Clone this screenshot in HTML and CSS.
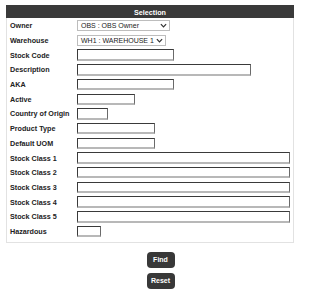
FILE: index.html
```html
<!DOCTYPE html>
<html>
<head>
<meta charset="utf-8">
<link rel="stylesheet" href="styles.css">
</head>
<body>
<div class="panel">
  <div class="header">Selection</div>
  <div class="rows">
    <div class="label">Owner</div>
    <div class="cell"><div class="select w-owner"><span>OBS : OBS Owner</span><svg class="chev" viewBox="0 0 8 5" width="7" height="5"><path d="M1 1 L4 4 L7 1" fill="none" stroke="#333" stroke-width="1.4"/></svg></div></div>
    <div class="label">Warehouse</div>
    <div class="cell"><div class="select w-wh"><span>WH1 : WAREHOUSE 1</span><svg class="chev" viewBox="0 0 8 5" width="7" height="5"><path d="M1 1 L4 4 L7 1" fill="none" stroke="#333" stroke-width="1.4"/></svg></div></div>
    <div class="label">Stock Code</div>
    <div class="cell"><input class="inp w-97" type="text"></div>
    <div class="label">Description</div>
    <div class="cell"><input class="inp w-174" type="text"></div>
    <div class="label">AKA</div>
    <div class="cell"><input class="inp w-97" type="text"></div>
    <div class="label">Active</div>
    <div class="cell"><input class="inp w-58" type="text"></div>
    <div class="label">Country of Origin</div>
    <div class="cell"><input class="inp w-31" type="text"></div>
    <div class="label">Product Type</div>
    <div class="cell"><input class="inp w-78" type="text"></div>
    <div class="label">Default UOM</div>
    <div class="cell"><input class="inp w-78" type="text"></div>
    <div class="label">Stock Class 1</div>
    <div class="cell"><input class="inp w-213" type="text"></div>
    <div class="label">Stock Class 2</div>
    <div class="cell"><input class="inp w-213" type="text"></div>
    <div class="label">Stock Class 3</div>
    <div class="cell"><input class="inp w-213" type="text"></div>
    <div class="label">Stock Class 4</div>
    <div class="cell"><input class="inp w-213" type="text"></div>
    <div class="label">Stock Class 5</div>
    <div class="cell"><input class="inp w-213" type="text"></div>
    <div class="label">Hazardous</div>
    <div class="cell"><input class="inp w-24" type="text"></div>
  </div>
</div>
<div class="actions">
  <button class="btn">Find</button>
  <button class="btn">Reset</button>
</div>
</body>
</html>
```
FILE: styles.css
```css
html, body {
  margin: 0;
  padding: 0;
  background: #fff;
  font-family: "Liberation Sans", Arial, sans-serif;
}
.panel {
  margin: 5px 0 0 6px;
  width: 288px;
  box-sizing: border-box;
  border: 1px solid #e2e2e2;
  border-top: none;
}
.header {
  background: #3a3a3a;
  color: #fff;
  font-weight: bold;
  font-size: 7.2px;
  text-align: center;
  height: 13px;
  line-height: 15px;
  margin: 0 -1px;
}
.rows {
  display: grid;
  grid-template-columns: 67px 1fr;
  grid-auto-rows: 14.7px;
  padding: 0.5px 3px 3px 3px;
}
.label {
  font-weight: bold;
  font-size: 7.2px;
  color: #222;
  display: flex;
  align-items: center;
  white-space: nowrap;
}
.cell {
  display: flex;
  align-items: center;
}
.inp {
  box-sizing: border-box;
  height: 11.5px;
  margin: 0;
  padding: 0;
  background: #fff;
  border-style: solid;
  border-width: 1.5px 1.5px 2px 1.5px;
  border-color: #3a3a3a #6a6a6a #b8b8b8 #3a3a3a;
  outline: none;
}
.w-97 { width: 97px; }
.w-174 { width: 174px; }
.w-58 { width: 58px; }
.w-31 { width: 31px; }
.w-78 { width: 78px; }
.w-213 { width: 213px; }
.w-24 { width: 24px; }
.select {
  box-sizing: border-box;
  height: 11px;
  border: 1px solid #bdbdbd;
  background: #fff;
  display: flex;
  align-items: center;
  justify-content: space-between;
  padding: 0 2px 0 3px;
  font-size: 7px;
  color: #222;
  white-space: nowrap;
}
.w-owner { width: 93px; }
.w-wh { width: 89px; }
.chev { flex: none; }
.actions {
  display: flex;
  flex-direction: column;
  align-items: center;
  gap: 5px;
  margin-top: 9px;
  padding-left: 1px;
}
.btn {
  box-sizing: border-box;
  width: 28px;
  height: 16px;
  border: none;
  border-radius: 4px;
  background: #383838;
  color: #fff;
  font-family: "Liberation Sans", Arial, sans-serif;
  font-weight: bold;
  font-size: 7px;
  padding: 0;
  margin: 0;
}
```
